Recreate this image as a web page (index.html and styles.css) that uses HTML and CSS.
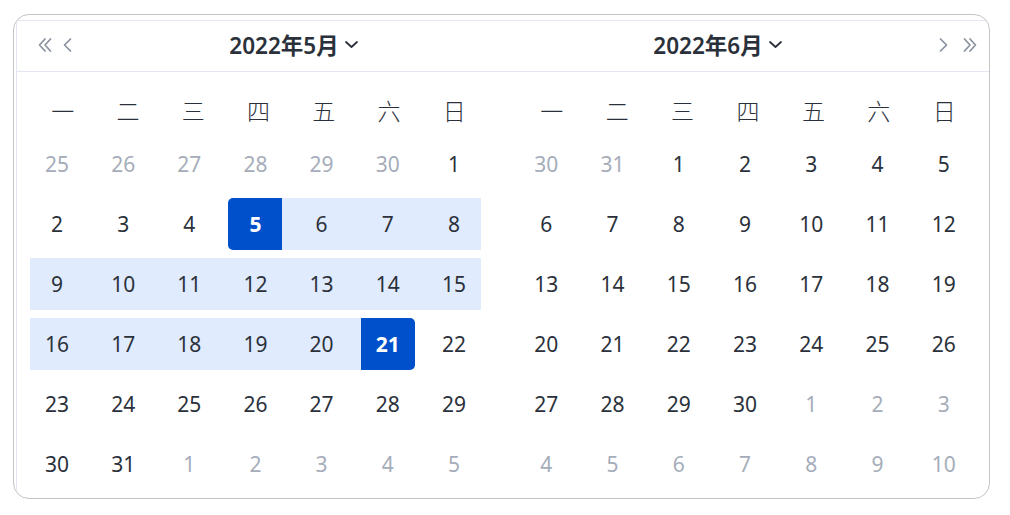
FILE: index.html
```html
<!DOCTYPE html>
<html lang="zh-CN">
<head>
    <meta charset="UTF-8">
    <meta name="viewport" content="width=device-width, initial-scale=1.0">
    <title>日期范围选择</title>
    <link rel="stylesheet" href="styles.css">
</head>
<body>
    <div class="frame">
        <div class="range-picker">
            <div class="panel panel-left">
                <div class="panel-header">
                    <div class="nav nav-left">
                        <svg width="16" height="16" viewBox="0 0 16 16"><path d="M8 2 2.5 8 8 14M13.5 2 8 8 13.5 14"/></svg>
                        <svg width="11" height="16" viewBox="0 0 11 16"><path d="M8.5 2 2.5 8 8.5 14"/></svg>
                    </div>
                    <div class="title">2022年5月<svg width="15" height="9" viewBox="0 0 15 9"><path d="M2 2 7.5 7 13 2"/></svg></div>
                </div>
                <div class="panel-body">
                    <div class="week">
                        <span>一</span><span>二</span><span>三</span><span>四</span><span>五</span><span>六</span><span>日</span>
                    </div>
                    <div class="days" id="may"></div>
                </div>
            </div>
            <div class="panel panel-right">
                <div class="panel-header">
                    <div class="title">2022年6月<svg width="15" height="9" viewBox="0 0 15 9"><path d="M2 2 7.5 7 13 2"/></svg></div>
                    <div class="nav nav-right">
                        <svg width="11" height="16" viewBox="0 0 11 16"><path d="M2.5 2 8.5 8 2.5 14"/></svg>
                        <svg width="16" height="16" viewBox="0 0 16 16"><path d="M2.5 2 8 8 2.5 14M8 2 13.5 8 8 14"/></svg>
                    </div>
                </div>
                <div class="panel-body">
                    <div class="week">
                        <span>一</span><span>二</span><span>三</span><span>四</span><span>五</span><span>六</span><span>日</span>
                    </div>
                    <div class="days" id="june"></div>
                </div>
            </div>
        </div>
    </div>

    <script>
document.addEventListener('DOMContentLoaded', function() {
    // 2022-05-05 ~ 2022-05-21
    const rangeStart = 5;
    const rangeEnd = 21;

    function renderMonth(el, prevTail, count, nextCount, inRange) {
        const cells = [];
        prevTail.forEach(d => cells.push({ day: d, muted: true }));
        for (let d = 1; d <= count; d++) cells.push({ day: d, muted: false });
        for (let d = 1; d <= nextCount; d++) cells.push({ day: d, muted: true });

        cells.forEach(c => {
            const cell = document.createElement('div');
            cell.className = 'cell';
            if (c.muted) cell.classList.add('muted');
            if (inRange && !c.muted) {
                if (c.day === rangeStart) cell.classList.add('range-start');
                else if (c.day === rangeEnd) cell.classList.add('range-end');
                else if (c.day > rangeStart && c.day < rangeEnd) cell.classList.add('in-range');
            }
            cell.innerHTML = `<div class="date">${c.day}</div>`;
            el.appendChild(cell);
        });
    }

    renderMonth(document.getElementById('may'), [25, 26, 27, 28, 29, 30], 31, 5, true);
    renderMonth(document.getElementById('june'), [30, 31], 30, 10, false);
});
</script>
</body>
</html>
```
FILE: styles.css
```css
body {
    margin: 0;
    background-color: #fff;
    font-family: "Noto Sans", "Noto Sans CJK SC", sans-serif;
    color: #2b313b;
}

.frame {
    margin: 14px 0 0 13px;
    width: 977px;
    height: 485px;
    box-sizing: border-box;
    border: 1px solid #c4c4c4;
    border-radius: 16px;
    padding: 5px 0 0 2px;
    overflow: hidden;
}

.range-picker {
    display: flex;
    height: 100%;
    border-top: 1px solid #e2e7f1;
    border-left: 1px solid #e2e7f1;
}

.panel-left {
    width: 483px;
}

.panel-right {
    flex: 1;
}

.panel-header {
    display: flex;
    align-items: center;
    height: 50px;
    border-bottom: 1px solid #e2e7f1;
}

.nav {
    display: flex;
    align-items: center;
    padding-bottom: 2px;
}

.nav svg {
    fill: none;
    stroke: #8a919f;
    stroke-width: 1.7;
    stroke-linecap: round;
    stroke-linejoin: round;
}

.nav-left {
    width: 71px;
    box-sizing: border-box;
    padding-left: 20px;
    gap: 9px;
}

.nav-right {
    width: 53px;
    box-sizing: border-box;
    padding-left: 2px;
    gap: 13px;
}

.title {
    flex: 1;
    display: flex;
    align-items: center;
    justify-content: center;
    gap: 5px;
    padding-bottom: 3px;
    font-size: 22.5px;
    font-weight: 600;
    color: #2b313b;
}

.title svg {
    fill: none;
    stroke: #2b313b;
    stroke-width: 1.8;
    stroke-linecap: round;
    stroke-linejoin: round;
}

.panel-body {
    padding-top: 18px;
}

.panel-left .panel-body {
    padding-left: 7px;
    padding-right: 13px;
}

.panel-right .panel-body {
    padding-left: 13px;
    padding-right: 12px;
}

.week {
    display: grid;
    grid-template-columns: repeat(7, 1fr);
    height: 40px;
    margin-bottom: 8px;
    padding-left: 6px;
    align-items: center;
    font-size: 23px;
    font-weight: 300;
    color: #2b313b;
}

.week span {
    text-align: center;
}

.days {
    display: grid;
    grid-template-columns: repeat(7, 1fr);
    grid-auto-rows: 52px;
    row-gap: 8px;
}

.cell {
    display: flex;
    justify-content: center;
    font-size: 21px;
}

.cell.muted {
    color: #a6adba;
}

.date {
    width: 54px;
    height: 52px;
    display: flex;
    align-items: center;
    justify-content: center;
}

.in-range {
    background-color: #e0ebfd;
}

.in-range:nth-child(7n+1) {
    background: linear-gradient(to right, transparent 6px, #e0ebfd 6px);
}

.in-range:nth-child(7n) {
    background: linear-gradient(to left, transparent 6px, #e0ebfd 6px);
}

.range-start {
    background: linear-gradient(to right, transparent 50%, #e0ebfd 50%);
}

.range-end {
    background: linear-gradient(to left, transparent 50%, #e0ebfd 50%);
}

.range-start .date,
.range-end .date {
    background-color: #0050cc;
    color: #fff;
    font-weight: 700;
}

.range-start .date {
    border-radius: 5px 0 0 5px;
}

.range-end .date {
    border-radius: 0 5px 5px 0;
}
```
